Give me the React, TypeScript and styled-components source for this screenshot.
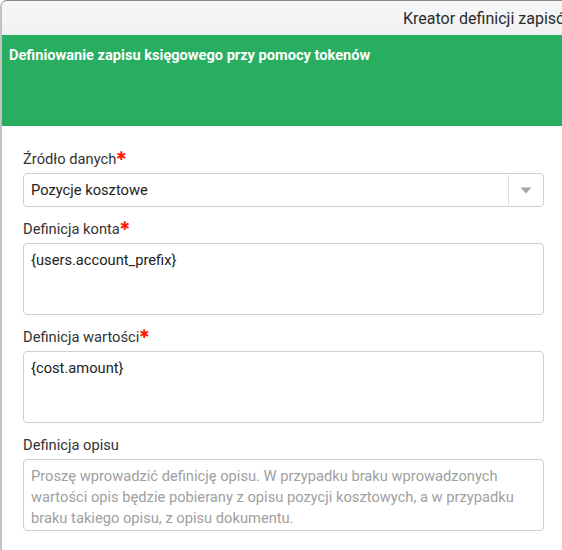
import React from "react";
import styled, { createGlobalStyle } from "styled-components";

const Global = createGlobalStyle`
  html, body { margin: 0; padding: 0; background: #fff; }
  body { font-family: Roboto, "Liberation Sans", sans-serif; overflow: hidden; }
  * { box-sizing: border-box; }
`;

const Window = styled.div`
  width: 562px;
  height: 550px;
  border-left: 2px solid #c2c2c2;
  border-top: 1px solid #8a8a8a;
  border-top-left-radius: 7px;
  overflow: hidden;
  display: flex;
  flex-direction: column;
  background: #fff;
`;

const TitleBar = styled.div`
  height: 34px;
  flex: none;
  background: linear-gradient(#f6f7f8, #eff1f2);
  display: flex;
  align-items: center;
  padding-left: 401px;
  white-space: nowrap;
  overflow: hidden;
  font-size: 16px;
  color: #2b2b2b;
`;

const Banner = styled.div`
  height: 91px;
  flex: none;
  background: #27ae60;
  color: #fff;
  font-weight: 700;
  font-size: 14.6px;
  padding: 10px 7px;
  line-height: 20px;
`;

const Body = styled.div`
  padding: 23px 18px 0 21px;
  display: flex;
  flex-direction: column;
  gap: 12px;
`;

const Field = styled.div`
  display: flex;
  flex-direction: column;
`;

const Label = styled.div`
  font-size: 14.7px;
  line-height: 21px;
  color: #333;
  margin-bottom: 3px;
  display: flex;
  align-items: flex-start;
`;

const Star = styled.span`
  color: #ff1a00;
  font-family: "DejaVu Sans", sans-serif;
  font-size: 12px;
  line-height: 14px;
  font-weight: bold;
`;

const SelectBox = styled.div`
  height: 34px;
  border: 1px solid #cfcfcf;
  border-radius: 4px;
  display: flex;
  align-items: center;
  font-size: 14.7px;
  color: #222;
`;

const SelectValue = styled.div`
  flex: 1;
  padding-left: 7px;
`;

const ArrowZone = styled.div`
  width: 35px;
  height: 30px;
  border-left: 1px solid #dcdcdc;
  display: flex;
  align-items: center;
  justify-content: center;
`;

const Area = styled.div<{ $placeholder?: boolean }>`
  height: 72px;
  border: 1px solid #cfcfcf;
  border-radius: 4px;
  padding: 6px 24px 0 7px;
  font-size: 14.7px;
  line-height: 21px;
  color: ${(p) => (p.$placeholder ? "#a0a0a0" : "#222")};
`;

function Req({ children, required }: { children: React.ReactNode; required?: boolean }) {
  return (
    <Label>
      {children}
      {required && <Star>✱</Star>}
    </Label>
  );
}

export default function App() {
  return (
    <>
      <Global />
      <Window>
        <TitleBar>Kreator definicji zapisów księgowych</TitleBar>
        <Banner>Definiowanie zapisu księgowego przy pomocy tokenów</Banner>
        <Body>
          <Field>
            <Req required>Źródło danych</Req>
            <SelectBox>
              <SelectValue>Pozycje kosztowe</SelectValue>
              <ArrowZone>
                <svg width="12" height="7" viewBox="0 0 12 7">
                  <path d="M0.5 0.5 L11.5 0.5 L6 6.5 Z" fill="#a3a8ae" />
                </svg>
              </ArrowZone>
            </SelectBox>
          </Field>
          <Field>
            <Req required>Definicja konta</Req>
            <Area>{"{users.account_prefix}"}</Area>
          </Field>
          <Field>
            <Req required>Definicja wartości</Req>
            <Area>{"{cost.amount}"}</Area>
          </Field>
          <Field>
            <Req>Definicja opisu</Req>
            <Area $placeholder>
              Proszę wprowadzić definicję opisu. W przypadku braku wprowadzonych wartości opis będzie pobierany z opisu pozycji kosztowych, a w przypadku braku takiego opisu, z opisu dokumentu.
            </Area>
          </Field>
        </Body>
      </Window>
    </>
  );
}
